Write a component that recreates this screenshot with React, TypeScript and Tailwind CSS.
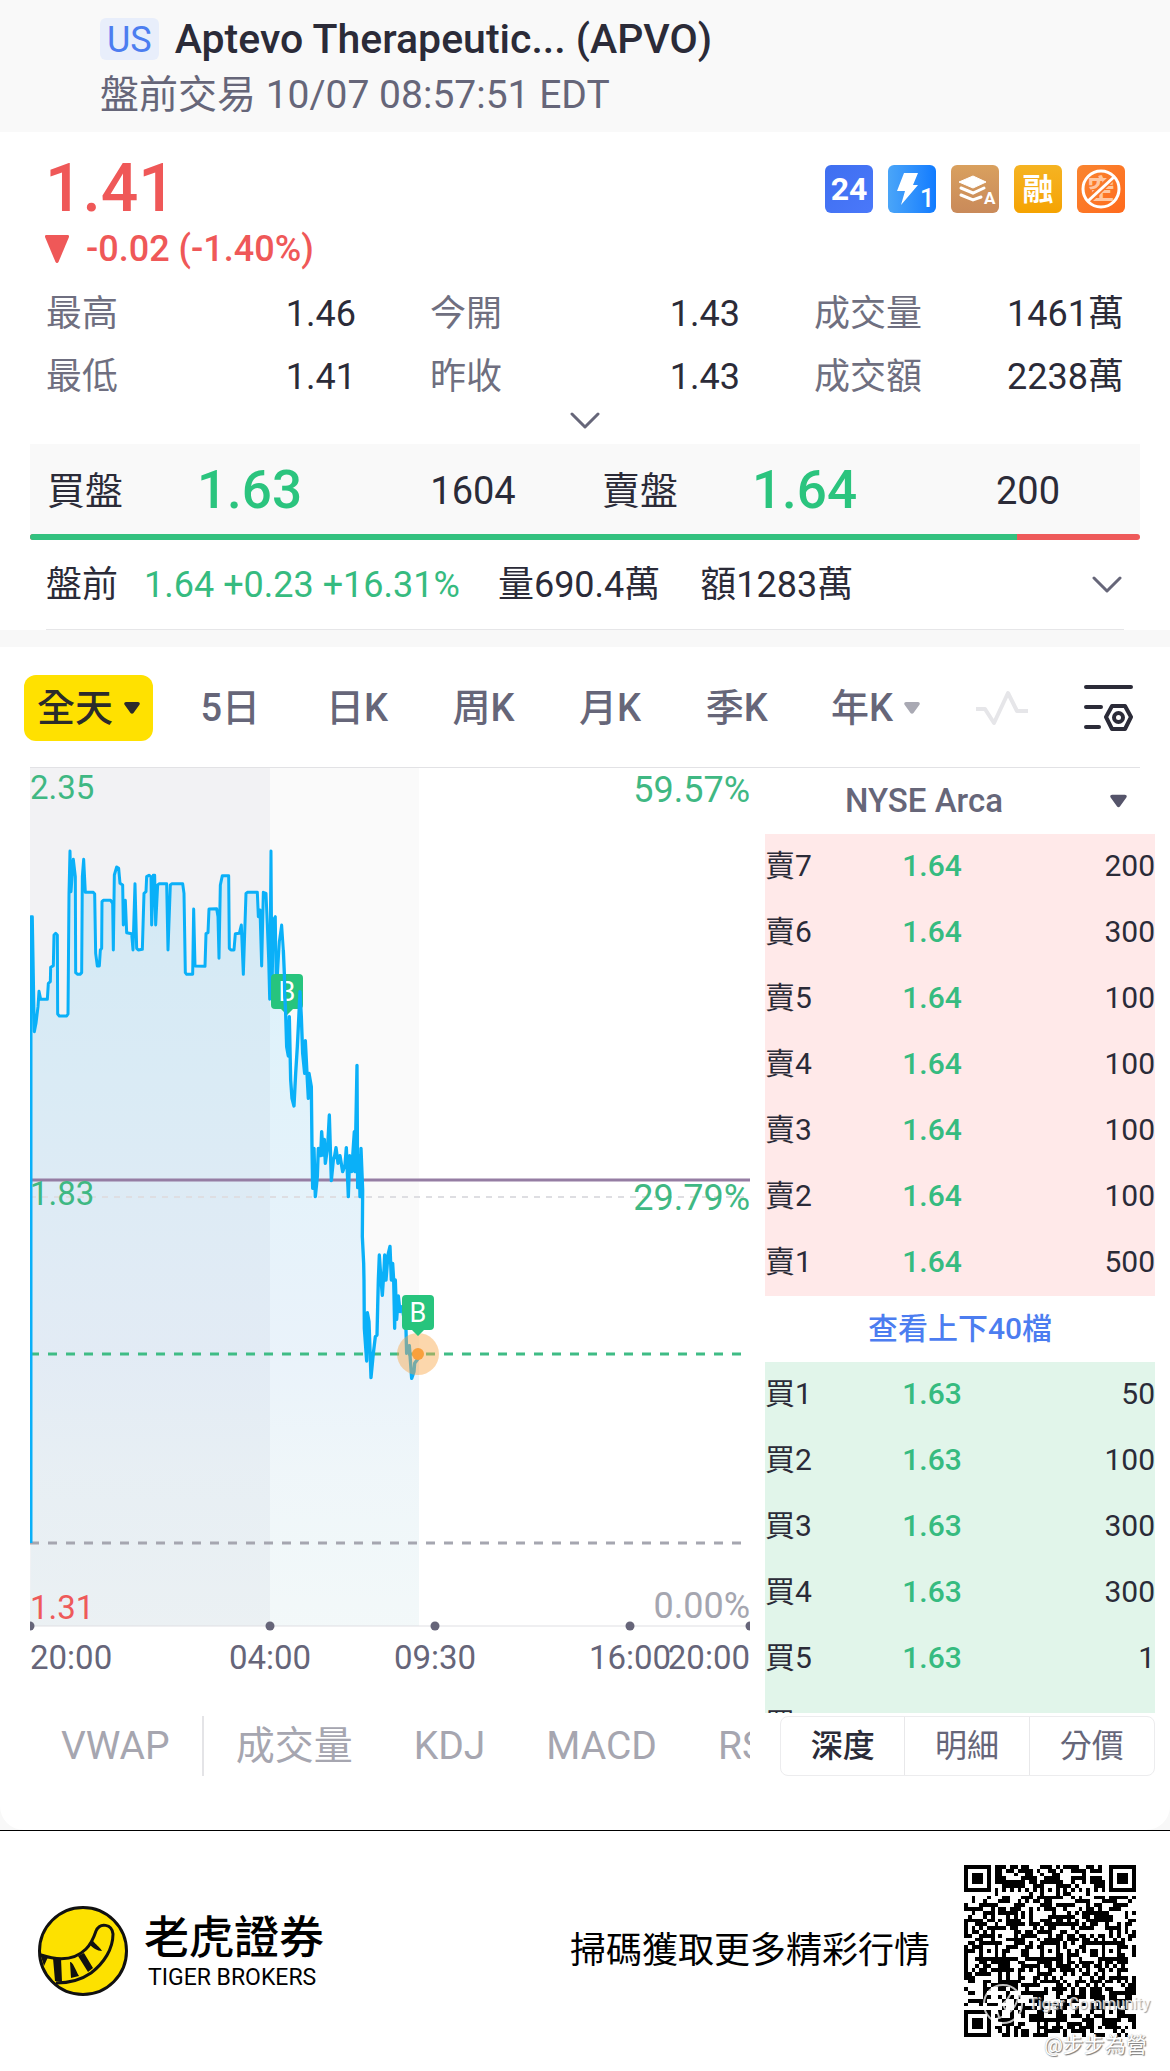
const stats = [
  { label: '最高', value: '1.46' },
  { label: '今開', value: '1.43' },
  { label: '成交量', value: '1461萬' },
  { label: '最低', value: '1.41' },
  { label: '昨收', value: '1.43' },
  { label: '成交額', value: '2238萬' },
];

const quotes = [
  { label: '買盤', price: '1.63', size: '1604' },
  { label: '賣盤', price: '1.64', size: '200' },
];

const periods = ['5日', '日K', '周K', '月K', '季K'];

const asks = [
  { label: '賣7', price: '1.64', size: '200' },
  { label: '賣6', price: '1.64', size: '300' },
  { label: '賣5', price: '1.64', size: '100' },
  { label: '賣4', price: '1.64', size: '100' },
  { label: '賣3', price: '1.64', size: '100' },
  { label: '賣2', price: '1.64', size: '100' },
  { label: '賣1', price: '1.64', size: '500' },
];

const bids = [
  { label: '買1', price: '1.63', size: '50' },
  { label: '買2', price: '1.63', size: '100' },
  { label: '買3', price: '1.63', size: '300' },
  { label: '買4', price: '1.63', size: '300' },
  { label: '買5', price: '1.63', size: '1' },
  { label: '買6', price: '', size: '' },
];

// series points, in thirds of a chart unit
const overnight =
  '63,2349 63,470 67,470 70,640 73,815 78,790 84,740 87,694 92,718 112,718 115,670 121,665 122,622 130,617 132,525 137,520 142,525 143,762 148,768 170,768 174,762 177,400 180,273 183,395 190,298 196,350 197,638 203,643 210,643 215,638 217,350 221,298 226,397 250,397 254,402 257,580 262,618 268,618 271,570 275,565 276,425 280,421 302,421 308,430 310,570 313,345 320,321 326,325 330,370 338,375 340,495 346,421 350,518 365,521 369,570 375,371 380,565 385,570 397,568 402,400 408,395 410,350 417,346 423,350 425,495 430,346 434,346 437,495 443,375 448,371 470,371 474,570 481,375 486,371 518,371 522,400 526,638 530,643 548,643 551,447 555,618 585,619 588,521 594,518 597,447 620,446 624,470 627,595 631,375 637,347 656,347 658,565 663,570 672,570 676,521 688,520 694,495 700,643 708,400 712,397 742,397 745,470 750,450 755,618 760,397 768,400 772,495 776,600 779,718 783,273 786,700 790,480 796,470 799,700 808,545 815,495 820,570';
const preMarket =
  '820,570 823,640 824,700 827,760 830,860 835,888 838,770 842,960 846,1015 852,1038 857,940 862,860 866,780 870,695 874,770 878,880 884,940 886,842 892,960 895,1015 897,940 904,980 906,1160 908,1285 912,1165 916,1310 922,1250 925,1165 932,1187 935,1115 940,1185 943,1138 946,1210 953,1160 958,1065 964,1262 970,1200 974,1187 978,1163 984,1210 990,1187 998,1235 1005,1215 1009,1163 1015,1310 1019,1187 1025,1235 1033,1115 1035,1235 1041,916 1043,1283 1048,1187 1050,1310 1053,1165 1058,1290 1057,1430 1061,1510 1062,1560 1063,1705 1070,1803 1072,1658 1077,1685 1083,1853 1090,1780 1096,1730 1101,1725 1103,1640 1105,1560 1108,1485 1113,1560 1117,1606 1122,1530 1124,1485 1128,1560 1134,1485 1140,1459 1144,1560 1148,1510 1151,1560 1154,1705 1156,1560 1160,1678 1165,1608 1170,1655 1176,1640 1183,1680 1188,1710 1190,1780 1198,1757 1205,1855 1212,1835 1214,1810 1225,1795';

const sessions = [
  { x: 0, label: '20:00', anchor: 'start' },
  { x: 240, label: '04:00', anchor: 'middle' },
  { x: 405, label: '09:30', anchor: 'middle' },
  { x: 600, label: '16:00', anchor: 'middle' },
  { x: 720, label: '20:00', anchor: 'end' },
] as const;

function Caret({ className }: { className?: string }) {
  return (
    <svg viewBox="0 0 16 12" className={className} fill="currentColor" aria-hidden="true">
      <path d="M2 0h12c1.500 0 2.300 1.500 1.400 2.700l-5.900 8.300c-.8 1.100-2.200 1.100-3 0L.6 2.700C-.3 1.500.5 0 2 0z" />
    </svg>
  );
}

function Chevron() {
  return (
    <svg
      viewBox="0 0 30 17"
      className="h-[17px] w-[30px]"
      fill="none"
      stroke="currentColor"
      strokeWidth="3"
      strokeLinecap="round"
      strokeLinejoin="round"
      aria-hidden="true"
    >
      <path d="M2 2l13 13L28 2" />
    </svg>
  );
}

function Badges() {
  return (
    <div className="flex gap-[15px] pt-4">
      <span className="flex size-12 items-center justify-center rounded-md bg-linear-to-br from-[#3f6ff0] to-[#4a78fa] text-[32px] leading-none font-bold text-white">
        24
      </span>
      <svg viewBox="0 0 48 48" className="size-12 rounded-md bg-linear-to-r from-[#4aa5f8] to-[#0f7bff]">
        <path d="M16 8h14l-5 12h5L13 40l4-14H9z" fill="#fff" />
        <text x="32" y="42" fontSize="25" fontWeight="500" fill="#fff">1</text>
      </svg>
      <svg viewBox="0 0 48 48" className="size-12 rounded-md bg-linear-to-b from-[#d9a05e] to-[#c98a5a]">
        <path d="M8 17l14-6 13 6-13 6z" fill="#fff" stroke="#fff" strokeLinejoin="round" />
        <path d="M10 23l12 5 11-5M10 30l12 5 8-3" fill="none" stroke="#fff" strokeWidth="3" strokeLinecap="round" />
        <text x="33" y="39" fontSize="17" fontWeight="700" fill="#fff">A</text>
      </svg>
      <span className="flex size-12 items-center justify-center rounded-md bg-linear-to-b from-[#f5b321] to-[#f5a300] text-[31px] leading-none font-bold text-white">
        融
      </span>
      <svg viewBox="0 0 48 48" className="size-12 rounded-md bg-linear-to-br from-[#f98530] to-[#ff6a1c]">
        <text x="24" y="34" fontSize="27" fontWeight="700" fill="#ffc7a0" textAnchor="middle">空</text>
        <path d="M11 36L37 11" stroke="#f97a2c" strokeWidth="7" />
        <circle cx="24" cy="24" r="18" fill="none" stroke="#fff" strokeWidth="3" />
        <path d="M11 36L37 12" stroke="#fff" strokeWidth="3" />
      </svg>
    </div>
  );
}

function BuyMarker({ x, y }: { x: number; y: number }) {
  return (
    <g transform={`translate(${x} ${y})`}>
      <path d="M4 0h24a4 4 0 0 1 4 4v27a4 4 0 0 1-4 4h-6l-6 6-6-6H4a4 4 0 0 1-4-4V4a4 4 0 0 1 4-4z" fill="#27c47d" />
      <text x="16" y="27" fontSize="27" fill="#fff" textAnchor="middle">B</text>
    </g>
  );
}

function PriceChart() {
  return (
    <svg viewBox="0 0 720 932" className="block w-full" role="img" aria-label="APVO 全天">
      <defs>
        <linearGradient id="area" x1="0" y1="270" x2="0" y2="2598" gradientUnits="userSpaceOnUse">
          <stop offset="0" stopColor="#00adff" stopOpacity="0.13" />
          <stop offset="0.3" stopColor="#00adff" stopOpacity="0.1" />
          <stop offset="0.65" stopColor="#2f9dff" stopOpacity="0.08" />
          <stop offset="0.8" stopColor="#1fadef" stopOpacity="0.05" />
          <stop offset="1" stopColor="#00bfe0" stopOpacity="0.03" />
        </linearGradient>
      </defs>
      <rect width="240" height="858" fill="#f2f2f4" />
      <rect x="240" width="149" height="858" fill="#fafafa" />
      <polygon
        transform="translate(-20 -8) scale(0.33333)"
        points={`60,2598 ${overnight} ${preMarket} 1227,1795 1227,2598`}
        fill="url(#area)"
      />
      <path d="M0 429h720" stroke="#dedee2" strokeWidth="2" strokeDasharray="6 6" />
      <path d="M0 412h720" stroke="#957da3" strokeWidth="3" />
      <path d="M0 586h711" stroke="#3fbc85" strokeWidth="3" strokeDasharray="9 9" />
      <path d="M0 775h711" stroke="#a5a6b0" strokeWidth="3" strokeDasharray="9 9" />
      <g transform="translate(-20 -8) scale(0.33333)" fill="none" stroke="#0ab0f8" strokeWidth="9" strokeLinejoin="round">
        <polyline points={overnight} />
      </g>
      <BuyMarker x={241} y={206} />
      <g transform="translate(-20 -8) scale(0.33333)" fill="none" stroke="#0ab0f8" strokeWidth="10" strokeLinejoin="round">
        <polyline points={preMarket} />
      </g>
      <circle cx="388" cy="586" r="21" fill="#f9a648" fillOpacity="0.45" />
      <circle cx="388" cy="586" r="6" fill="#f9a03c" />
      <BuyMarker x={372} y={527} />
      <g fontSize="33">
        <text x="0" y="31" fill="#3fb883">2.35</text>
        <text x="0" y="437" fill="#3fb883">1.83</text>
        <text x="0" y="851" fill="#ee5a5a">1.31</text>
      </g>
      <g fontSize="36" textAnchor="end">
        <text x="720" y="34" fill="#3fb883">59.57%</text>
        <text x="720" y="442" fill="#3fb883">29.79%</text>
        <text x="720" y="850" fill="#a5a6b0">0.00%</text>
      </g>
      <path d="M0 858h720" stroke="#dfdfe3" strokeWidth="1" />
      {sessions.map((s) => (
        <g key={s.x} fill="#666579">
          <circle cx={s.x} cy="858" r="4.500" />
          <text x={s.x} y="901" fontSize="33" textAnchor={s.anchor}>{s.label}</text>
        </g>
      ))}
    </svg>
  );
}

function DepthTable({ rows, className }: { rows: typeof asks; className: string }) {
  return (
    <table className={`w-full table-fixed text-[30px] leading-[44px] text-[#2b2b38] ${className}`}>
      <tbody>
        {rows.map((row) => (
          <tr key={row.label} className="h-[66px]">
            <th scope="row" className="w-[90px] p-0 pb-[2px] text-left font-normal">{row.label}</th>
            <td className="w-[154px] p-0 pb-[2px] text-center font-medium text-[#36bb80]">{row.price}</td>
            <td className="p-0 pb-[2px] text-right">{row.size}</td>
          </tr>
        ))}
      </tbody>
    </table>
  );
}

const QR_SIZE = 45;

function isDark(x: number, y: number) {
  for (const [fx, fy] of [[3, 3], [QR_SIZE - 4, 3], [3, QR_SIZE - 4]]) {
    const d = Math.max(Math.abs(x - fx), Math.abs(y - fy));
    if (d <= 4) return d !== 2 && d !== 4;
  }
  for (const ax of [6, 22, 38]) {
    for (const ay of [6, 22, 38]) {
      if ((ax === 6 && ay !== 22) || (ay === 6 && ax !== 22)) continue;
      const d = Math.max(Math.abs(x - ax), Math.abs(y - ay));
      if (d <= 2) return d !== 1;
    }
  }
  if (x === 6 || y === 6) return (x + y) % 2 === 0;
  let h = Math.imul(x + 11, 374761393) ^ Math.imul(y + 7, 668265263);
  h = Math.imul(h ^ (h >>> 13), 1274126177);
  return ((h ^ (h >>> 16)) & 255) < 132;
}

function QrCode() {
  let d = '';
  for (let y = 0; y < QR_SIZE; y++) {
    for (let x = 0; x < QR_SIZE; x++) {
      if (isDark(x, y)) d += `M${x} ${y}h1v1h-1z`;
    }
  }
  return (
    <svg viewBox="0 0 45 45" className="size-[172px]" shapeRendering="crispEdges" role="img" aria-label="QR code">
      <path d={d} fill="#000" />
    </svg>
  );
}

function TigerLogo() {
  return (
    <svg viewBox="0 0 90 90" className="size-[90px]" aria-hidden="true">
      <circle cx="45" cy="45" r="43.500" fill="#fde100" stroke="#111" strokeWidth="3" />
      <path d="M3 49c18 6 34 5 45-6 6-6 8-12 10-18 4-9 16-7 17 3 0 15-9 29-22 39-10 7-22 10-35 10" fill="none" stroke="#111" strokeWidth="3" />
      <path d="M2 47l8 4-4 9zM15 52h8l1 24-7-1zM32 56c3 0 5 7 9 14l-8 2zM40 50l6-3 9 15-5 4zM51 38l4-3c3 4 6 5 9 10-5 0-9-3-13-7z" fill="#111" />
    </svg>
  );
}

export default function App() {
  return (
    <div className="min-h-screen w-full bg-white font-[Roboto,'Noto_Sans_CJK_TC',sans-serif] text-[#2b2b38]">
      <header className="bg-[#f9f9f9] px-[100px] pt-[15px] pb-[5px]">
        <div className="flex h-12 items-center gap-4">
          <span className="rounded-md bg-[#e8eefb] px-[7px] pt-[2px] text-[36px] leading-[40px] text-[#4c7df0]">US</span>
          <h1 className="text-[41px] leading-[48px] font-medium">Aptevo Therapeutic... (APVO)</h1>
        </div>
        <p className="text-[39px] leading-[64px] text-[#666679]">盤前交易 10/07 08:57:51 EDT</p>
      </header>

      <section>
        <div className="flex justify-between px-[45px] pt-[17px]">
          <div className="font-medium text-[#ef5858]">
            <p className="text-[66px] leading-[80px]">1.41</p>
            <p className="flex items-center gap-[17px] text-[36px] leading-[40px]">
              <svg viewBox="0 0 24 28" className="h-7 w-6" fill="currentColor" aria-hidden="true">
                <path d="M1 0h22c1 0 1 1 1 2L13.500 27c-1 1.500-2 1.500-3 0L0 2C0 1 0 0 1 0z" />
              </svg>
              -0.02 (-1.40%)
            </p>
          </div>
          <Badges />
        </div>

        <dl className="grid grid-cols-3 gap-x-[74px] px-[46px] pt-[14px] text-[36px] leading-[63px]">
          {stats.map((s) => (
            <div key={s.label} className="flex justify-between">
              <dt className="text-[#6f6f80]">{s.label}</dt>
              <dd>{s.value}</dd>
            </div>
          ))}
        </dl>
        <button type="button" aria-label="展開" className="flex h-[35px] w-full justify-center pt-[3px] text-[#666679]">
          <Chevron />
        </button>

        <div className="px-[30px]">
          <div className="grid h-[90px] grid-cols-2 bg-[#f9f9f9] pt-1">
            {quotes.map((q) => (
              <div key={q.label} className="flex items-center pl-[17px] text-[38px]">
                <span className="w-[150px]">{q.label}</span>
                <span className="w-[164px] text-[53px] font-medium text-[#2bc47e]">{q.price}</span>
                <span className="flex-1 text-center">{q.size}</span>
              </div>
            ))}
          </div>
          <div className="flex h-[6px] overflow-hidden rounded-full bg-[#ee5a5a]">
            <div className="w-8/9 bg-[#33c17f]" />
          </div>
        </div>

        <div className="mx-[46px] flex h-[90px] items-center border-b border-[#e6e6e8] text-[36px]">
          <span>盤前</span>
          <span className="ml-[26px] text-[#36bb80]">1.64 +0.23 +16.31%</span>
          <span className="ml-[38px]">量690.4萬</span>
          <span className="ml-10">額1283萬</span>
          <button type="button" aria-label="盤前詳情" className="mr-[2px] ml-auto text-[#666679]">
            <Chevron />
          </button>
        </div>
      </section>

      <div className="bg-[#f8f8f8] pt-[17px]">
        <section className="rounded-b-3xl bg-white pb-[54px]">
          <nav className="flex h-[120px] items-center pt-[2px] pr-[37px] pl-6 text-[38px] font-medium text-[#666679]">
            <button type="button" className="flex h-[66px] items-center gap-[11px] rounded-xl bg-[#ffe100] px-[13px] text-[#2b2b2b]">
              全天
              <Caret className="h-3 w-4" />
            </button>
            <div className="ml-[14px] flex w-[633px]">
              {periods.map((p) => (
                <button type="button" key={p} className="flex-1">{p}</button>
              ))}
            </div>
            <button type="button" className="ml-[31px] flex items-center gap-[11px]">
              年K
              <Caret className="h-3 w-4 text-[#a9a9b3]" />
            </button>
            <button type="button" aria-label="走勢" className="mr-[55px] ml-auto">
              <svg viewBox="0 0 52 36" className="h-9 w-[52px]" fill="none" stroke="#e6e6e9" strokeWidth="4" strokeLinejoin="round">
                <path d="M0 19h9l9 14L32 3l9 18h11" />
              </svg>
            </button>
            <button type="button" aria-label="圖表設置">
              <svg viewBox="0 0 50 48" className="h-12 w-[50px]" fill="none" stroke="#2b2b38" strokeWidth="4" strokeLinecap="round" strokeLinejoin="round">
                <path d="M3 3h45M3 23h15M3 43h13" />
                <path d="M29 22h13l6 11-6 12H29l-6-12z" />
                <circle cx="35.500" cy="33.500" r="4.500" />
              </svg>
            </button>
          </nav>
          <div className="mx-[30px] border-t border-[#e2e2e5]" />

          <div className="flex gap-[15px] pr-[15px] pl-[30px]">
            <div className="min-w-0 flex-1">
              <PriceChart />
              <div className="mt-4 flex h-[60px] items-center overflow-hidden pl-[31px] text-[39px] whitespace-nowrap text-[#a6a6b0]">
                <button type="button">VWAP</button>
                <div className="mx-8 h-full w-[2px] shrink-0 bg-[#e4e4e7]" />
                <div className="flex gap-[61px]">
                  <button type="button">成交量</button>
                  <button type="button">KDJ</button>
                  <button type="button">MACD</button>
                  <button type="button">RSI</button>
                </div>
              </div>
            </div>

            <aside className="w-[390px] shrink-0">
              <button type="button" className="flex h-[66px] w-full items-center pr-7 pl-[80px] text-[33px] font-medium text-[#666679]">
                NYSE Arca
                <Caret className="ml-auto h-[14px] w-[17px] text-[#55546a]" />
              </button>
              <DepthTable rows={asks} className="bg-[#ffe9e9]" />
              <a href="#depth" className="flex h-[66px] items-center justify-center pb-[2px] text-[30px] font-medium text-[#4c7df0]">
                查看上下40檔
              </a>
              <div className="h-[351px] overflow-hidden">
                <DepthTable rows={bids} className="bg-[#e1f5ea]" />
              </div>
              <div className="mt-[3px] ml-[15px] grid h-[60px] grid-cols-3 divide-x divide-[#e8e8ea] rounded-lg border border-[#ececee] text-[32px] text-[#666679]">
                <button type="button" className="font-medium text-[#2b2b38]">深度</button>
                <button type="button">明細</button>
                <button type="button">分價</button>
              </div>
            </aside>
          </div>
        </section>
      </div>

      <footer className="flex h-[241px] items-center border-t border-black pr-[34px] pl-[38px] text-black">
        <TigerLogo />
        <div className="ml-4">
          <p className="text-[45px] leading-[54px] font-medium">老虎證券</p>
          <p className="pl-1 text-[23px] leading-[24px]">TIGER BROKERS</p>
        </div>
        <p className="mr-[34px] ml-auto text-[36px]">掃碼獲取更多精彩行情</p>
        <div className="relative">
          <QrCode />
          <div className="absolute top-[118px] left-[18px] flex items-center gap-1 text-[16px] whitespace-nowrap text-white/80 [text-shadow:1px_1px_1px_#999]">
            <svg viewBox="0 0 42 42" className="size-[42px]" fill="none" stroke="#fff" strokeOpacity="0.75" strokeWidth="2">
              <circle cx="21" cy="21" r="19" />
              <path d="M3 24c12 3 20-2 25-12 3-6 9-3 8 3-2 10-10 18-22 21M14 25l3 9M21 22l5 9" />
            </svg>
            Tiger Community
          </div>
          <div className="absolute top-[166px] left-[80px] text-[21px] leading-[28px] whitespace-nowrap text-white [text-shadow:1px_1px_1px_#777,0_0_1px_#aaa]">
            @步步為營
          </div>
        </div>
      </footer>
    </div>
  );
}
